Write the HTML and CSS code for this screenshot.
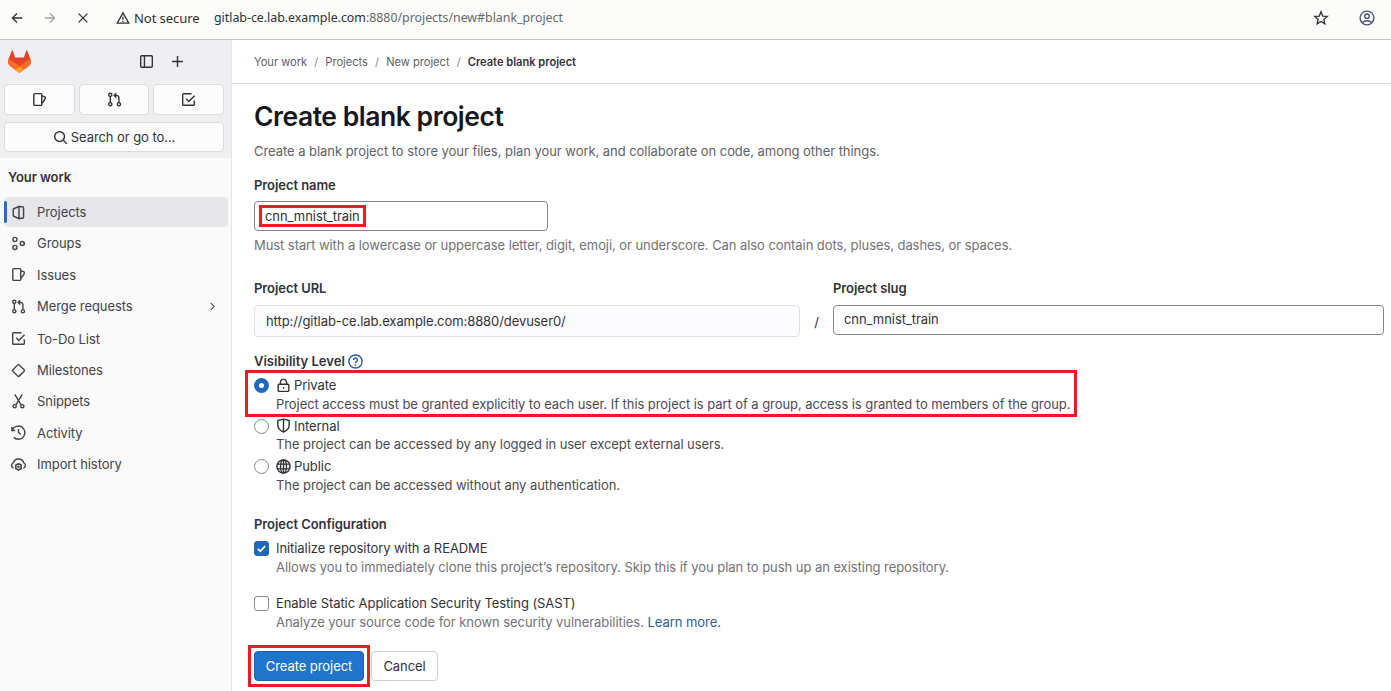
FILE: index.html
```
<!DOCTYPE html>
<html lang="en">
<head>
<meta charset="utf-8">
<title>Create blank project</title>
<link rel="stylesheet" href="styles.css">
</head>
<body>
<svg class="defs" width="0" height="0">
  <symbol id="issues" viewBox="0 0 16 16"><path d="M2.900 1.750h6.500a1 1 0 0 1 1 1v10.500a1 1 0 0 1-1 1H2.900a1 1 0 0 1-1-1V2.750a1 1 0 0 1 1-1zM10.700 4.200l2.800.8a1 1 0 0 1 .7 1.200l-.6 1.900-2.900 4"/></symbol>
  <symbol id="merge" viewBox="0 0 16 16"><circle cx="3.500" cy="3" r="1.700"/><circle cx="3.500" cy="13" r="1.700"/><circle cx="12.700" cy="13" r="1.700"/><path d="M3.500 4.800v6.400M12.700 11.200V6a2.200 2.200 0 0 0-2.200-2.200H8M9.800 1.400 7.600 3.700l2.200 2.300"/></symbol>
  <symbol id="todo" viewBox="0 0 16 16"><path d="M14.200 9v4.200a1 1 0 0 1-1 1H2.800a1 1 0 0 1-1-1V2.800a1 1 0 0 1 1-1h8.400M5.500 7.300l2.800 2.800 6.200-6.200"/></symbol>
</svg>
<header class="browser">
  <svg class="nav back" viewBox="0 0 16 16"><path d="M14 8H3M8 2.800 2.800 8 8 13.200"/></svg>
  <svg class="nav forward" viewBox="0 0 16 16"><path d="M2 8h11M8 2.800 13.200 8 8 13.200"/></svg>
  <svg class="nav stop" viewBox="0 0 16 16"><path d="m3 3 10 10M13 3 3 13"/></svg>
  <svg class="warn" viewBox="0 0 16 16"><path d="M8 2.200 14.600 13.800H1.400zM8 6.500v3.400M8 11v1.500"/></svg>
  <span class="insecure">Not secure</span>
  <span class="url">gitlab-ce.lab.example.com<span class="path">:8880/projects/new#blank_project</span></span>
  <svg class="star" viewBox="0 0 16 16"><path d="m8 1.800 1.700 4.300 4.600.3-3.500 3 1.100 4.500L8 11.400l-3.900 2.500 1.100-4.500-3.500-3 4.600-.3z"/></svg>
  <svg class="profile" viewBox="0 0 16 16"><circle cx="8" cy="8" r="6.900"/><circle cx="8" cy="6.200" r="2.200"/><path d="M3.300 12.600c2.600-2.400 6.800-2.400 9.400 0"/></svg>
</header>
<div class="app">
  <aside class="sidebar">
    <div class="side-top">
      <div class="brand">
        <svg class="logo" viewBox="0 0 24 24"><path fill="#e24329" d="m23 9.300-3.200-8.500a.6.6 0 0 0-1.200.1l-2.200 6.600H7.600L5.400.9A.6.6 0 0 0 4.200.8L1 9.300a6 6 0 0 0 2 7L12 23l9-6.700a6 6 0 0 0 2-7z"/><path fill="#fc6d26" d="M23 9.300a10.800 10.800 0 0 0-4.400 2L12 16.200l4.200 3.600 4.800-3.500a6 6 0 0 0 2-7zM1 9.300a10.800 10.800 0 0 1 4.400 2l6.600 4.900-4.200 3.600L3 16.300a6 6 0 0 1-2-7z"/><path fill="#fca326" d="m7.800 19.800 4.200-3.600 4.200 3.600L12 23z"/></svg>
        <svg class="icon panel" viewBox="0 0 16 16"><rect x="1.800" y="1.800" width="12.400" height="12.400" rx="1.200"/><path d="M5.800 2v12"/></svg>
        <svg class="icon plus" viewBox="0 0 16 16"><path d="M8 2.200v11.600M2.200 8h11.600"/></svg>
      </div>
      <div class="shortcuts">
        <a class="tile"><svg class="icon"><use href="#issues"/></svg></a>
        <a class="tile"><svg class="icon"><use href="#merge"/></svg></a>
        <a class="tile"><svg class="icon"><use href="#todo"/></svg></a>
      </div>
      <div class="search"><svg class="icon" viewBox="0 0 16 16"><circle cx="7" cy="7" r="5.200"/><path d="m11 11 3.800 3.800"/></svg><span>Search or go to...</span></div>
    </div>
    <h2 class="side-title">Your work</h2>
    <nav class="menu">
      <a class="item active"><svg class="icon" viewBox="0 0 16 16"><path d="M8.500 1.500 3 4a1 1 0 0 0-.6.900v6.200a1 1 0 0 0 .6.900l5.500 2.500zM8.500 1.800h3.700a1.200 1.200 0 0 1 1.200 1.200v10a1.200 1.200 0 0 1-1.200 1.200H8.500"/></svg><span>Projects</span></a>
      <a class="item"><svg class="icon" viewBox="0 0 16 16"><circle cx="4.200" cy="3.700" r="2.200"/><circle cx="4.200" cy="12.200" r="2.200"/><circle cx="12" cy="8" r="2.200"/></svg><span>Groups</span></a>
      <a class="item"><svg class="icon"><use href="#issues"/></svg><span>Issues</span></a>
      <a class="item"><svg class="icon"><use href="#merge"/></svg><span>Merge requests</span><svg class="chevron" viewBox="0 0 16 16"><path d="m5.500 3 5 5-5 5"/></svg></a>
      <a class="item todo"><svg class="icon"><use href="#todo"/></svg><span>To-Do List</span></a>
      <a class="item"><svg class="icon" viewBox="0 0 16 16"><path d="M7.300 2 2 7.300a1 1 0 0 0 0 1.400L7.300 14a1 1 0 0 0 1.400 0L14 8.700a1 1 0 0 0 0-1.400L8.700 2a1 1 0 0 0-1.400 0z"/></svg><span>Milestones</span></a>
      <a class="item"><svg class="icon" viewBox="0 0 16 16"><path d="m4 .5 6.800 11M12 .5l-6.800 11"/><circle cx="3.900" cy="13" r="1.700"/><circle cx="12.100" cy="13" r="1.700"/></svg><span>Snippets</span></a>
      <a class="item"><svg class="icon" viewBox="0 0 16 16"><path d="M.9 2.200v3.600h3.600M1.400 5.400A7 7 0 1 1 3 13.200M8 4.200V8l2.400 2.200"/></svg><span>Activity</span></a>
      <a class="item"><svg class="icon" viewBox="0 0 16 16"><path d="M2.800 11.800A3 3 0 0 1 2.300 6.200 6 6 0 0 1 13.700 6.200a3 3 0 0 1-.5 5.600"/><circle cx="8" cy="10.500" r="3"/><circle cx="8" cy="10.500" r=".6"/><path d="M8 6.400v1M8 13.600v1.200M4.400 8.400l.9.500M10.700 12.100l.9.500M4.400 12.600l.9-.5M10.700 8.900l.9-.5"/></svg><span>Import history</span></a>
    </nav>
  </aside>
  <main class="main">
    <div class="crumbs"><span>Your work</span><i>/</i><span>Projects</span><i>/</i><span>New project</span><i>/</i><b>Create blank project</b></div>
    <div class="content">
      <h1>Create blank project</h1>
      <p class="lead">Create a blank project to store your files, plan your work, and collaborate on code, among other things.</p>
      <div class="label name-label">Project name</div>
      <div class="input name-input"><span>cnn_mnist_train</span><div class="mark mark-name"></div></div>
      <p class="help">Must start with a lowercase or uppercase letter, digit, emoji, or underscore. Can also contain dots, pluses, dashes, or spaces.</p>
      <div class="location">
        <div class="col-url"><div class="label">Project URL</div><div class="input url-input"><span>http://gitlab-ce.lab.example.com:8880/devuser0/</span></div></div>
        <div class="slash">/</div>
        <div class="col-slug"><div class="label">Project slug</div><div class="input slug-input"><span>cnn_mnist_train</span></div></div>
      </div>
      <div class="label vis-label"><span>Visibility Level</span><svg class="question" viewBox="0 0 16 16"><circle cx="8" cy="8" r="7"/><path d="M5.900 6.300a2.100 2.100 0 1 1 3 1.900c-.6.300-.9.600-.9 1.400M8 11v1.400"/></svg></div>
      <div class="option first">
        <span class="radio checked"></span>
        <div><div class="name"><svg class="icon" viewBox="0 0 16 16"><rect x="2.300" y="6.700" width="11.400" height="7.600" rx="1"/><path d="M4.700 6.500V4.800a3.300 3.300 0 0 1 6.600 0v1.700M8 9.500v2"/></svg><span>Private</span></div><p>Project access must be granted explicitly to each user. If this project is part of a group, access is granted to members of the group.</p></div>
        <div class="mark mark-private"></div>
      </div>
      <div class="option">
        <span class="radio"></span>
        <div><div class="name"><svg class="icon" viewBox="0 0 16 16"><path d="M8 1.200 14 2.800V8c0 3-2.500 5.500-6 7-3.500-1.500-6-4-6-7V2.800zM8 1.200V15"/></svg><span>Internal</span></div><p>The project can be accessed by any logged in user except external users.</p></div>
      </div>
      <div class="option">
        <span class="radio"></span>
        <div><div class="name"><svg class="icon" viewBox="0 0 16 16"><circle cx="8" cy="8" r="7"/><ellipse cx="8" cy="8" rx="3.200" ry="7"/><path d="M1.500 5.500h13M1.500 10.500h13M8 1v14"/></svg><span>Public</span></div><p>The project can be accessed without any authentication.</p></div>
      </div>
      <div class="label conf-label">Project Configuration</div>
      <div class="option check-row">
        <span class="check checked"><svg viewBox="0 0 16 16"><path d="m3.500 8.500 3 3 6-6.500"/></svg></span>
        <div><div class="name">Initialize repository with a README</div><p class="muted">Allows you to immediately clone this project’s repository. Skip this if you plan to push up an existing repository.</p></div>
      </div>
      <div class="option check-row second">
        <span class="check"></span>
        <div><div class="name">Enable Static Application Security Testing (SAST)</div><p class="muted">Analyze your source code for known security vulnerabilities. <a>Learn more.</a></p></div>
      </div>
      <div class="actions"><div class="btn primary"><span>Create project</span><div class="mark mark-create"></div></div><div class="btn"><span>Cancel</span></div></div>
    </div>
  </main>
</div>
</body>
</html>
```
FILE: styles.css
```
* { box-sizing: border-box; }
body { margin: 0; width: 1391px; height: 691px; overflow: hidden; background: #fff; color: #333238; font: 13px/18px Inter, "Liberation Sans", sans-serif; letter-spacing: -.07px; }
p, h1, h2 { margin: 0; }
svg { fill: none; stroke: currentColor; stroke-width: 1.5; flex: none; overflow: visible; }
.defs { position: absolute; }
.icon { width: 15px; height: 15px; }
span, b, i, p, h1, h2, .label, .name { white-space: nowrap; }

.browser { display: flex; align-items: center; height: 40px; padding: 0 16px 4px 10px; border-bottom: 1px solid #c4c6c3; background: #fcfdfb; font: 13.1px/20px "Noto Sans", sans-serif; letter-spacing: 0; color: #303030; }
.nav { width: 14px; height: 14px; margin-right: 19px; }
.forward { color: #a5a5a5; }
.stop { margin-right: 26px; }
.warn { width: 14px; height: 14px; margin-right: 4px; }
.insecure { width: 80px; letter-spacing: -.1px; }
.url { font-size: 12.4px; letter-spacing: -.02px; }
.path { color: #686868; }
.star { width: 16px; height: 16px; margin-left: auto; margin-right: 30px; stroke-width: 1.3; }
.profile { width: 16px; height: 16px; color: #485078; stroke-width: 1.4; }

.app { display: flex; height: 651px; }
.sidebar { width: 232px; background: #fafafb; border-right: 1px solid #e6e6e9; }
.side-top { height: 118px; padding: 10px 7px 0 4px; background: #efeff1; }
.brand { display: flex; align-items: center; height: 23px; padding: 0 39px 0 3px; }
.logo { width: 25px; height: 24px; margin-right: auto; stroke: none; }
.plus { margin-left: 16px; }
.shortcuts { display: flex; gap: 4px; margin-top: 11px; }
.tile, .search { display: flex; align-items: center; justify-content: center; background: #fcfcfd; border: 1px solid #dcdce0; border-radius: 4px; }
.tile { flex: 1; height: 31px; }
.search { height: 30px; margin-top: 7px; gap: 3px; }
.side-title { margin: 10px 0 11px 8px; font-size: 13px; line-height: 18px; font-weight: 600; }
.menu { display: flex; flex-direction: column; gap: 1.35px; padding: 0 3px 0 4px; }
.item { display: flex; align-items: center; height: 30px; padding-left: 7px; gap: 11px; border-radius: 4px; color: #434248; }
.active { background: #e7e6e9; padding-left: 0; }
.active::before { content: ""; width: 3px; height: 22px; border-radius: 2px; background: #2f6cb5; margin-right: -7px; }
.todo { margin-top: 1.3px; }
.chevron { width: 11px; height: 11px; margin-left: auto; margin-right: 10px; }

.main { flex: 1; min-width: 0; }
.crumbs { display: flex; align-items: center; height: 44px; padding-left: 22px; border-bottom: 1px solid #dcdcde; font-size: 11.1px; letter-spacing: 0; color: #626168; }
.crumbs i { font-style: normal; width: 18.2px; text-align: center; color: #89888d; }
.crumbs b { font-weight: 600; color: #333238; }
.content { padding: 14px 7px 0 22px; }
h1 { font-size: 26.5px; line-height: 36px; font-weight: 600; color: #18171d; letter-spacing: -.47px; }
.lead { margin-top: 8px; color: #626168; letter-spacing: -.05px; }
.label { font-weight: 600; }
.name-label { margin-top: 16px; }
.input { position: relative; display: flex; align-items: center; height: 30px; border: 1px solid #85848a; border-radius: 4px; padding-left: 10px; background: #fff; }
.name-input { width: 294px; margin-top: 7px; }
.help { margin-top: 5px; color: #737278; }
.location { display: flex; margin-top: 25px; }
.col-url { width: 546px; }
.url-input { height: 32px; margin-top: 8px; padding-bottom: 1px; border-color: #e1e1e5; background: #fcfbfd; padding-left: 11px; }
.slash { width: 33px; padding-top: 34px; text-align: center; }
.col-slug { flex: 1; }
.slug-input { margin-top: 8px; padding-bottom: 2px; }
.vis-label { display: flex; align-items: center; margin-top: 15px; gap: 3.5px; }
.vis-label span { letter-spacing: 0; }
.question { width: 15px; height: 15px; color: #2f5ca0; }
.option { position: relative; display: flex; gap: 7px; margin-top: 3.5px; line-height: 18.5px; }
.option.first { margin-top: 6px; }
.name { display: flex; align-items: center; gap: 3px; height: 18.5px; }
.option p { color: #4c4b51; }
.option p.muted { color: #737278; letter-spacing: -.05px; }
.radio { width: 15px; height: 15px; margin-top: 2px; border: 1px solid #89888d; border-radius: 50%; background: #fff; }
.radio.checked { border: 5px solid #1f69b8; }
.conf-label { margin-top: 21px; }
.option.check-row { margin-top: 6px; }
.option.second { margin-top: 18px; }
.check { width: 15px; height: 15px; margin-top: 2px; border: 1px solid #89888d; border-radius: 3px; }
.check.checked { background: #1f69b8; border-color: #1f69b8; color: #fff; display: flex; }
.check svg { width: 13px; height: 13px; stroke-width: 2; }
.option a { color: #2f5ca0; }
.actions { display: flex; gap: 7px; margin-top: 20px; }
.btn { position: relative; display: flex; align-items: center; justify-content: center; width: 67px; height: 30px; border: 1px solid #cfced2; border-radius: 4px; }
.btn.primary { width: 110px; background: #1f75cb; border-color: #1b63ad; color: #fff; }
.mark { position: absolute; border: 3px solid #ed1c24; }
.mark-name { left: 4px; top: 3px; width: 107px; height: 22px; }
.mark-private { left: -9px; top: -6px; width: 832px; height: 47px; }
.mark-create { left: -7px; top: -7px; width: 122px; height: 42px; }
```
